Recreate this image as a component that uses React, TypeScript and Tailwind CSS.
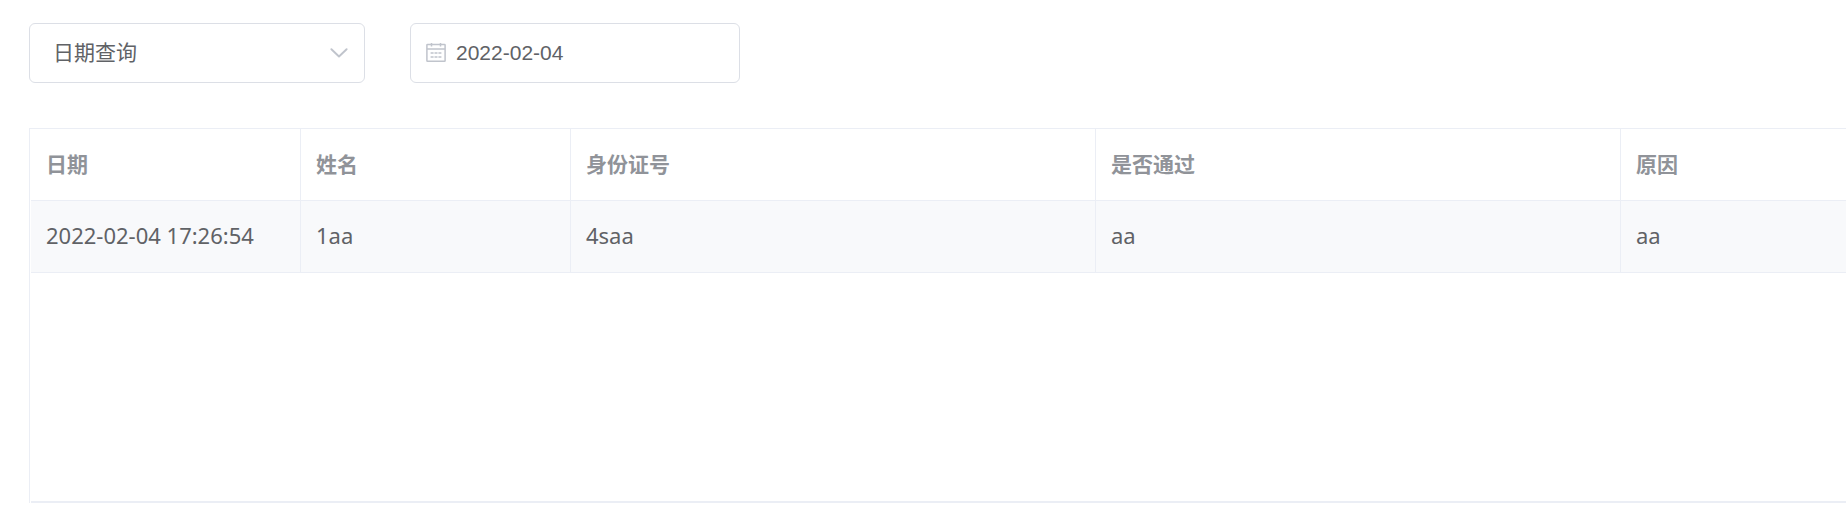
import { useState } from "react";

interface CheckRecord {
  date: string
  name: string
  idCard: string
  passed: string
  reason: string
}

const queryTypes = ["日期查询", "姓名查询", "身份证号查询"]

const records: CheckRecord[] = [
  { date: "2022-02-04 17:26:54", name: "1aa", idCard: "4saa", passed: "aa", reason: "aa" },
]

const columns: { key: keyof CheckRecord; label: string; width: string }[] = [
  { key: "date", label: "日期", width: "w-[270px]" },
  { key: "name", label: "姓名", width: "w-[270px]" },
  { key: "idCard", label: "身份证号", width: "w-[525px]" },
  { key: "passed", label: "是否通过", width: "w-[525px]" },
  { key: "reason", label: "原因", width: "" },
]

function ArrowDownIcon() {
  return (
    <svg
      viewBox="0 0 18 10"
      className="pointer-events-none absolute right-[17px] top-1/2 h-[10px] w-[18px] -translate-y-1/2"
      fill="none"
      stroke="#c0c4cc"
      strokeWidth="1.9"
      aria-hidden="true"
    >
      <path d="M1.4 1.2 9 8.5l7.6-7.3" strokeLinecap="round" strokeLinejoin="round" />
    </svg>
  )
}

function CalendarIcon() {
  return (
    <svg
      viewBox="0 0 20 20"
      className="pointer-events-none absolute left-4 top-1/2 h-5 w-5 -translate-y-1/2"
      fill="none"
      stroke="#c0c4cc"
      strokeWidth="1.5"
      aria-hidden="true"
    >
      <rect x="0.9" y="1.5" width="18.2" height="16.8" rx="0.6" />
      <path d="M0.9 6.1h18.2M5.5 0v3.4M14.5 0v3.4" />
      <path d="M4.6 9.9h3M8.5 9.9h3M12.4 9.9h3M4.6 13.9h3M8.5 13.9h3M12.4 13.9h3" />
    </svg>
  )
}

export default function App() {
  const [queryType, setQueryType] = useState(queryTypes[0])
  const [date, setDate] = useState("2022-02-04")

  return (
    <main className="overflow-hidden bg-white pb-2 pl-[29px] pt-[23px] font-['Noto_Sans','Noto_Sans_CJK_SC',sans-serif] text-[#606266]">
      <div className="flex gap-[45px]">
        <div className="relative w-[336px]">
          <select
            aria-label="查询方式"
            value={queryType}
            onChange={(e) => setQueryType(e.target.value)}
            className="h-[60px] w-full appearance-none rounded-md border border-[#dcdfe6] bg-white pb-[2px] pl-[23px] pr-10 font-['Noto_Sans_CJK_SC',sans-serif] text-[21px] outline-none"
          >
            {queryTypes.map((type) => (
              <option key={type}>{type}</option>
            ))}
          </select>
          <ArrowDownIcon />
        </div>

        <div className="relative w-[330px]">
          <CalendarIcon />
          <input
            type="text"
            aria-label="日期"
            value={date}
            onChange={(e) => setDate(e.target.value)}
            className="h-[60px] w-full rounded-md border border-[#dcdfe6] bg-transparent pl-[45px] pr-4 font-['Liberation_Sans',sans-serif] text-[21px] outline-none"
          />
        </div>
      </div>

      <div className="mt-[45px] border-l border-t border-[#ebeef5] pl-px">
        <div className="min-h-[374px] border-b-2 border-[#ebeef5]">
          <table className="w-full table-fixed border-separate border-spacing-0 text-left">
            <thead>
              <tr>
                {columns.map((col) => (
                  <th
                    key={col.key}
                    scope="col"
                    className={`${col.width} h-[72px] border-b border-r border-[#ebeef5] px-[15px] pb-[2px] font-['Noto_Sans_CJK_SC',sans-serif] text-[21px] font-bold text-[#909399] last:border-r-0`}
                  >
                    {col.label}
                  </th>
                ))}
              </tr>
            </thead>
            <tbody>
              {records.map((record) => (
                <tr key={record.date} className="bg-[#f8f9fb]">
                  {columns.map((col) => (
                    <td
                      key={col.key}
                      className="h-[72px] whitespace-nowrap border-b border-r border-[#ebeef5] px-[15px] pb-[2px] text-[22px] last:border-r-0"
                    >
                      {record[col.key]}
                    </td>
                  ))}
                </tr>
              ))}
            </tbody>
          </table>
        </div>
      </div>
    </main>
  )
}
